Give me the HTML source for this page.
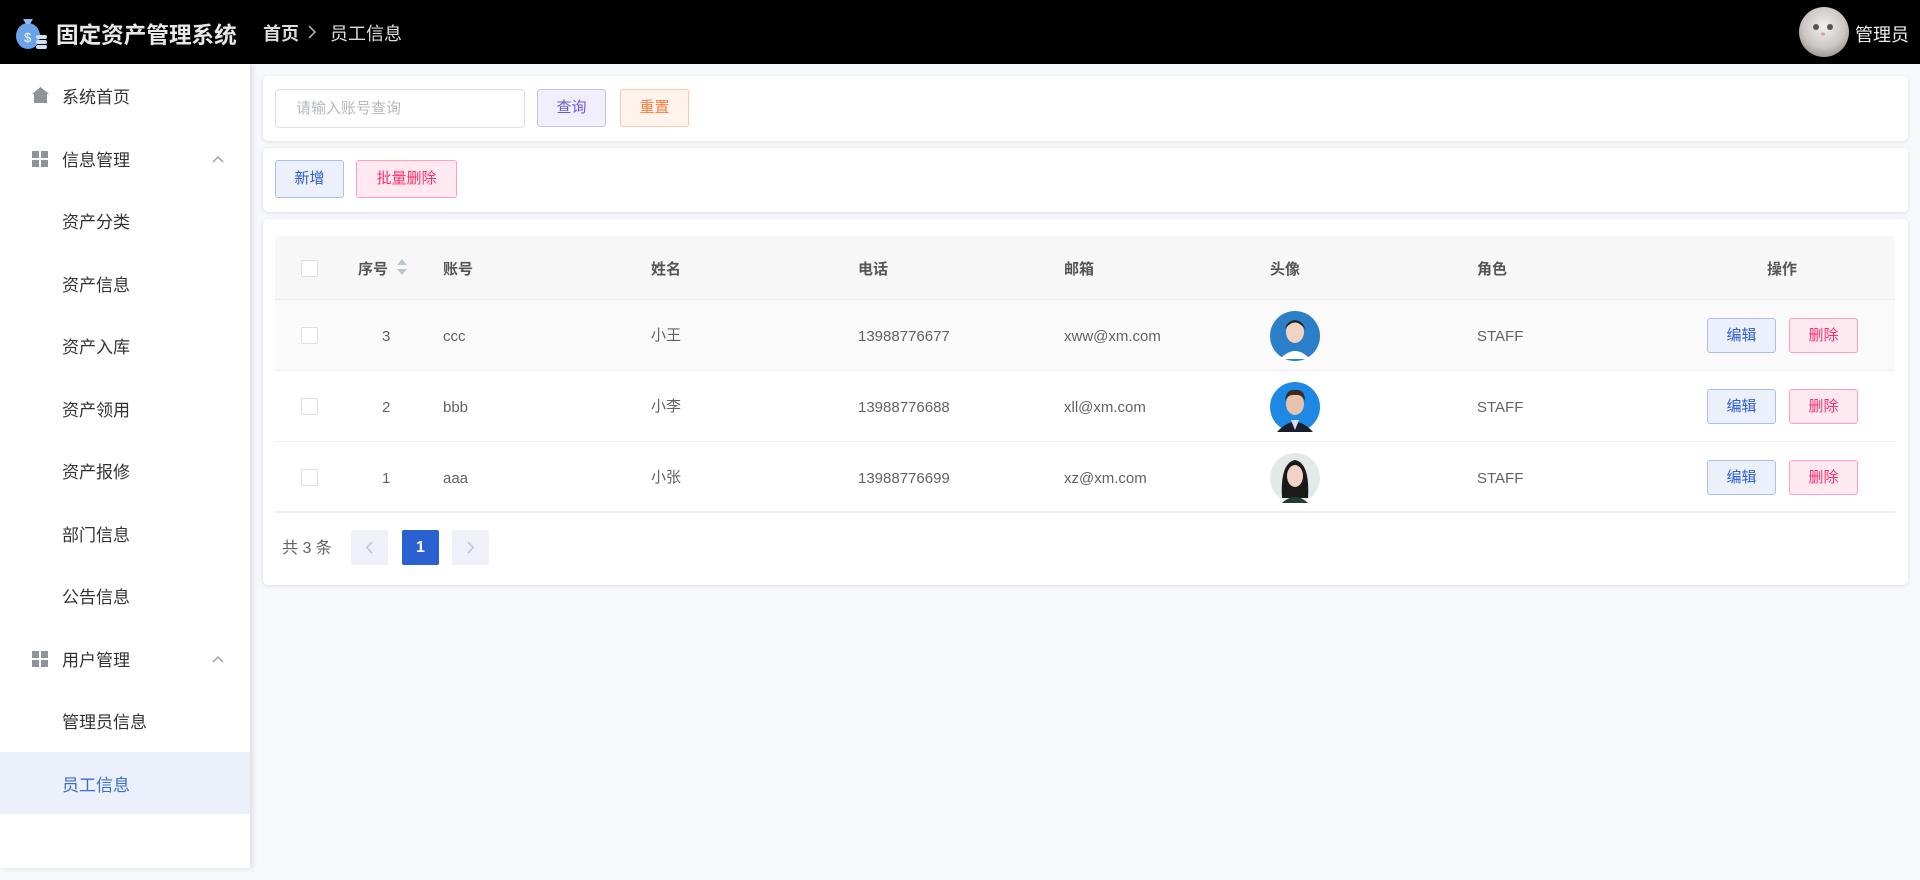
<!DOCTYPE html>
<html><head><meta charset="utf-8">
<style>
*{margin:0;padding:0;box-sizing:border-box}
body{width:1920px;height:880px;overflow:hidden;background:#f7f8fc;font-family:"Liberation Sans","Noto Sans CJK SC",sans-serif;color:#555;position:relative}
.hd{position:absolute;left:0;top:0;width:1920px;height:64px;background:#000}
.abs{position:absolute}
.side{position:absolute;left:0;top:64px;width:250px;height:804px;background:#fff;box-shadow:2px 0 6px rgba(0,0,0,.12)}
.it{position:absolute;left:0;width:250px;height:62.5px;line-height:62.5px;font-size:17px;color:#333}
.it span{position:absolute;left:62px;top:3px}
.card{position:absolute;left:263px;width:1645px;background:#fff;border-radius:5px;box-shadow:0 1px 4px rgba(0,0,0,.1)}
.btn{position:absolute;height:38px;line-height:36px;text-align:center;font-size:15px;border:1px solid;border-radius:3px}
.cb{position:absolute;left:301px;width:17px;height:17px;border:1px solid #dcdfe6;border-radius:2px;background:#fff}
.row{position:absolute;left:275px;width:1620px;border-bottom:1px solid #ebeef5}
.t{position:absolute;font-size:15px;color:#606266}
.l{margin-top:2px}
.th{position:absolute;font-size:15px;color:#555;font-weight:bold}
.eb{background:#ebf0fb;border-color:#a9c0ef;color:#2f5fcf;height:35px;line-height:33px;width:69px}
.db{background:#ffe9f0;border-color:#ff9fbd;color:#ff2d6c;height:35px;line-height:33px;width:69px}
</style></head><body>
<div class="hd">
 <svg class="abs" style="left:14px;top:13px" width="34" height="38" viewBox="0 0 34 38"><ellipse cx="14" cy="23" rx="12" ry="13" fill="#6aa3e8"/><path d="M9 6 L19 6 L16 11 L12 11Z" fill="#8fbcf0"/><text x="10" y="29" font-size="13" fill="#fff" font-family="Liberation Sans">$</text><rect x="22" y="22" width="11" height="4" rx="2" fill="#cfe0f5"/><rect x="22" y="27" width="11" height="4" rx="2" fill="#cfe0f5"/><rect x="22" y="32" width="11" height="4" rx="2" fill="#cfe0f5"/></svg>
 <div class="abs" style="left:56px;top:17px;font-size:22.6px;font-weight:bold;color:#e8e8e8">固定资产管理系统</div>
 <div class="abs" style="left:263px;top:20px;font-size:18px;font-weight:bold;color:#ddd">首页</div>
 <svg class="abs" style="left:308px;top:25px" width="8" height="14"><path d="M1 1 L7 7 L1 13" fill="none" stroke="#bbb" stroke-width="1.5"/></svg>
 <div class="abs" style="left:330px;top:20px;font-size:18px;color:#ddd">员工信息</div>
 <svg class="abs" style="left:1799px;top:7px" width="50" height="50"><defs><radialGradient id="cat" cx="50%" cy="40%" r="60%"><stop offset="0" stop-color="#f2f0ee"/><stop offset=".7" stop-color="#c9c6c3"/><stop offset="1" stop-color="#9c9a98"/></radialGradient></defs><circle cx="25" cy="25" r="25" fill="url(#cat)"/><circle cx="17" cy="20" r="3" fill="#555"/><circle cx="31" cy="20" r="3" fill="#555"/><ellipse cx="24" cy="27" rx="2" ry="1.5" fill="#d99"/></svg>
 <div class="abs" style="left:1855px;top:21px;font-size:18px;color:#eee">管理员</div>
</div>

<div class="side">
 <div class="it" style="top:0"><svg class="abs" style="left:32px;top:23px" width="17" height="16" viewBox="0 0 17 16"><path d="M8.5 0 L17 7 L15 7 L15 16 L2 16 L2 7 L0 7Z" fill="#909399"/></svg><span>系统首页</span></div>
 <div class="it" style="top:62.5px"><svg class="abs" style="left:32px;top:24px" width="16" height="16"><rect x="0" y="0" width="7" height="7" fill="#909399"/><rect x="9" y="0" width="7" height="7" fill="#909399"/><rect x="0" y="9" width="7" height="7" fill="#909399"/><rect x="9" y="9" width="7" height="7" fill="#909399"/></svg><span>信息管理</span><svg class="abs" style="left:212px;top:28px" width="12" height="8"><path d="M1 7 L6 2 L11 7" fill="none" stroke="#999" stroke-width="1.3"/></svg></div>
 <div class="it" style="top:125px"><span>资产分类</span></div>
 <div class="it" style="top:187.5px"><span>资产信息</span></div>
 <div class="it" style="top:250px"><span>资产入库</span></div>
 <div class="it" style="top:312.5px"><span>资产领用</span></div>
 <div class="it" style="top:375px"><span>资产报修</span></div>
 <div class="it" style="top:437.5px"><span>部门信息</span></div>
 <div class="it" style="top:500px"><span>公告信息</span></div>
 <div class="it" style="top:562.5px"><svg class="abs" style="left:32px;top:24px" width="16" height="16"><rect x="0" y="0" width="7" height="7" fill="#909399"/><rect x="9" y="0" width="7" height="7" fill="#909399"/><rect x="0" y="9" width="7" height="7" fill="#909399"/><rect x="9" y="9" width="7" height="7" fill="#909399"/></svg><span>用户管理</span><svg class="abs" style="left:212px;top:28px" width="12" height="8"><path d="M1 7 L6 2 L11 7" fill="none" stroke="#999" stroke-width="1.3"/></svg></div>
 <div class="it" style="top:625px"><span>管理员信息</span></div>
 <div class="it" style="top:687.5px;background:#ecf0fa;color:#3a6ed6"><span>员工信息</span></div>
</div>

<div class="card" style="top:76px;height:65px"></div>
<div class="abs" style="left:275px;top:89px;width:250px;height:39px;border:1px solid #dcdfe6;border-radius:4px;background:#fff;font-size:15px;color:#b5b8bf;line-height:37px;padding-left:20px">请输入账号查询</div>
<div class="btn" style="left:537px;top:89px;width:69px;background:#f1effc;border-color:#c8bff0;color:#6a5ad6">查询</div>
<div class="btn" style="left:620px;top:89px;width:69px;background:#fff3ec;border-color:#ffc8a8;color:#ff7a3d">重置</div>

<div class="card" style="top:148px;height:64px"></div>
<div class="btn" style="left:275px;top:160px;width:69px;background:#ebf0fb;border-color:#a9c0ef;color:#2f5fcf">新增</div>
<div class="btn" style="left:356px;top:160px;width:101px;background:#ffe9f0;border-color:#ff9fbd;color:#ff2d6c">批量删除</div>

<div class="card" style="top:219px;height:366px"></div>
<div class="row" style="top:236px;height:64px;background:#f7f7f8"></div>
<div class="row" style="top:300px;height:71px;background:#fafafb"></div>
<div class="row" style="top:371px;height:71px"></div>
<div class="row" style="top:442px;height:71px;border-bottom:2px solid #ebeef5"></div>

<div class="cb" style="top:260px"></div>
<div class="th" style="left:358px;top:258px">序号</div>
<svg class="abs" style="left:396px;top:258px" width="12" height="18"><path d="M6 1 L11 7 L1 7Z" fill="#c0c4cc"/><path d="M6 17 L11 11 L1 11Z" fill="#c0c4cc"/></svg>
<div class="th" style="left:443px;top:258px">账号</div>
<div class="th" style="left:651px;top:258px">姓名</div>
<div class="th" style="left:858px;top:258px">电话</div>
<div class="th" style="left:1064px;top:258px">邮箱</div>
<div class="th" style="left:1270px;top:258px">头像</div>
<div class="th" style="left:1477px;top:258px">角色</div>
<div class="th" style="left:1767px;top:258px">操作</div>

<div class="cb" style="top:327px"></div>
<div class="t l" style="left:382px;top:326px">3</div>
<div class="t l" style="left:443px;top:326px">ccc</div>
<div class="t" style="left:651px;top:324px">小王</div>
<div class="t l" style="left:858px;top:326px">13988776677</div>
<div class="t l" style="left:1064px;top:326px">xww@xm.com</div>
<svg class="abs" style="left:1270px;top:311px" width="50" height="50"><circle cx="25" cy="25" r="25" fill="#2b7fc8"/><ellipse cx="25" cy="21" rx="9" ry="11" fill="#f1d3c3"/><path d="M15 18 Q25 5 35 18 Q33 10 25 9 Q17 10 15 18Z" fill="#222"/><path d="M10 48 Q25 32 40 48Z" fill="#fff"/></svg>
<div class="t l" style="left:1477px;top:326px">STAFF</div>
<div class="btn eb" style="left:1707px;top:318px">编辑</div>
<div class="btn db" style="left:1789px;top:318px">删除</div>

<div class="cb" style="top:398px"></div>
<div class="t l" style="left:382px;top:397px">2</div>
<div class="t l" style="left:443px;top:397px">bbb</div>
<div class="t" style="left:651px;top:395px">小李</div>
<div class="t l" style="left:858px;top:397px">13988776688</div>
<div class="t l" style="left:1064px;top:397px">xll@xm.com</div>
<svg class="abs" style="left:1270px;top:382px" width="50" height="50"><circle cx="25" cy="25" r="25" fill="#1e88e5"/><ellipse cx="25" cy="22" rx="9" ry="11" fill="#e8c2ac"/><path d="M15 19 Q16 7 25 8 Q35 7 35 19 Q32 12 25 13 Q18 12 15 19Z" fill="#3a2a20"/><path d="M7 50 Q25 30 43 50Z" fill="#1a1f2e"/><path d="M21 38 L25 48 L29 38Z" fill="#dde"/></svg>
<div class="t l" style="left:1477px;top:397px">STAFF</div>
<div class="btn eb" style="left:1707px;top:389px">编辑</div>
<div class="btn db" style="left:1789px;top:389px">删除</div>

<div class="cb" style="top:469px"></div>
<div class="t l" style="left:382px;top:468px">1</div>
<div class="t l" style="left:443px;top:468px">aaa</div>
<div class="t" style="left:651px;top:466px">小张</div>
<div class="t l" style="left:858px;top:468px">13988776699</div>
<div class="t l" style="left:1064px;top:468px">xz@xm.com</div>
<svg class="abs" style="left:1270px;top:453px" width="50" height="50"><circle cx="25" cy="25" r="25" fill="#e4e8e8"/><path d="M12 45 Q10 10 25 7 Q40 10 38 45Z" fill="#1a1a1a"/><ellipse cx="25" cy="23" rx="8" ry="11" fill="#f0d2c6"/><path d="M12 50 Q25 38 38 50Z" fill="#1f3d33"/></svg>
<div class="t l" style="left:1477px;top:468px">STAFF</div>
<div class="btn eb" style="left:1707px;top:460px">编辑</div>
<div class="btn db" style="left:1789px;top:460px">删除</div>

<div class="abs" style="left:282px;top:534px;font-size:16px;color:#606266">共 3 条</div>
<svg class="abs" style="left:351px;top:530px" width="37" height="35"><rect width="37" height="35" rx="2" fill="#f0f0f8"/><path d="M21 12 L16 17.5 L21 23" fill="none" stroke="#c0c4cc" stroke-width="1.5"/></svg>
<div class="abs" style="left:402px;top:530px;width:37px;height:35px;background:#2962d0;border-radius:2px;text-align:center;line-height:35px;color:#fff;font-size:16px;font-weight:bold">1</div>
<svg class="abs" style="left:452px;top:530px" width="37" height="35"><rect width="37" height="35" rx="2" fill="#f0f0f8"/><path d="M16 12 L21 17.5 L16 23" fill="none" stroke="#c0c4cc" stroke-width="1.5"/></svg>
</body></html>
